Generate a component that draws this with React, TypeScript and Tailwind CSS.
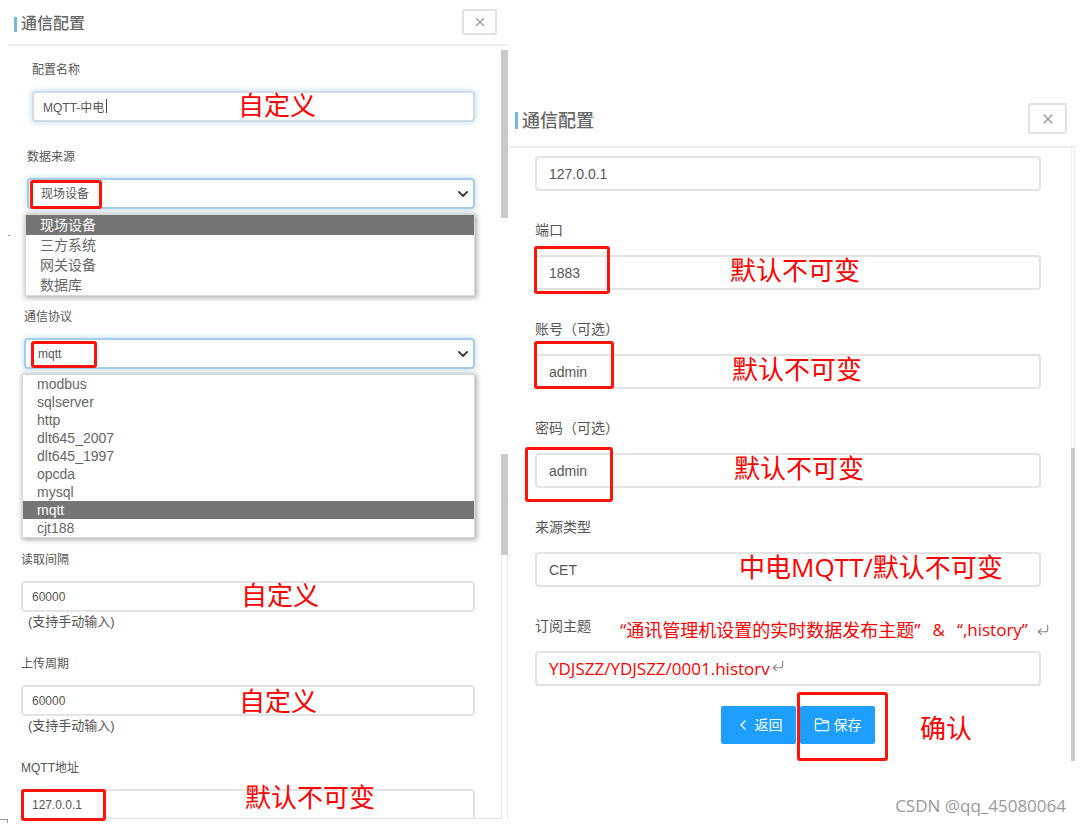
import type { ReactNode } from 'react';
import { ChevronDown, ChevronLeft, CornerDownLeft, X } from 'lucide-react';
import clsx from 'clsx';

const sources = ['现场设备', '三方系统', '网关设备', '数据库'];
const protocols = ['modbus', 'sqlserver', 'http', 'dlt645_2007', 'dlt645_1997', 'opcda', 'mysql', 'mqtt', 'cjt188'];

const uiFont = "font-['Liberation_Sans','Noto_Sans_CJK_SC',sans-serif]";
const noteFont = "font-['Open_Sans','Noto_Sans_CJK_SC',sans-serif]";

/* red remark lying over a field */
function Note({ className, children }: { className: string; children: ReactNode }) {
  return (
    <span
      className={clsx(
        'pointer-events-none absolute whitespace-nowrap text-[26px] leading-8 text-[#ff0000]',
        noteFont,
        className,
      )}
    >
      {children}
    </span>
  );
}

/* red frame around the value to fill in */
function Mark({ className }: { className: string }) {
  return <span className={clsx('pointer-events-none absolute rounded-[3px] border-[3px] border-[#ff1208]', className)} />;
}

function Header({ large }: { large?: boolean }) {
  return (
    <header
      className={clsx(
        'flex items-center justify-between border-b-2 border-[#ececf0]',
        large ? 'h-[57px] pl-1.5 pr-2' : 'ml-2 h-[46px] pl-1.5 pr-[11px]',
      )}
    >
      <h2 className={clsx('flex items-center gap-1 pt-1 font-medium leading-5 text-[#666]', large ? 'text-lg' : 'text-base')}>
        <span className={clsx('w-[3px] bg-[#74b7d8]', large ? 'h-[17px]' : 'h-[15px]')} />
        通信配置
      </h2>
      <button
        type="button"
        aria-label="关闭"
        className={clsx(
          'flex items-center justify-center rounded-xs border-2 border-[#e2e2e2] bg-white text-[#999]',
          large ? 'h-[31px] w-[39px]' : 'h-[26px] w-[35px]',
        )}
      >
        <X size={large ? 16 : 14} strokeWidth={2} />
      </button>
    </header>
  );
}

interface FieldProps {
  id: string;
  label?: string;
  value: string;
  large?: boolean;
  focused?: boolean;
  cut?: boolean;
  inputClass?: string;
  className?: string;
  children?: ReactNode;
}

function Field({ id, label, value, large, focused, cut, inputClass, className, children }: FieldProps) {
  return (
    <div className={className}>
      {label && (
        <label htmlFor={id} className={clsx('block leading-5', large ? 'mb-[15px] text-sm' : 'mb-[11px] text-xs')}>
          {label}
        </label>
      )}
      <div className="relative">
        <input
          id={id}
          aria-label={label ?? 'MQTT地址'}
          defaultValue={value}
          className={clsx(
            'block w-full border-2 bg-white outline-none',
            large ? 'h-[35px] px-3' : 'px-[9px] text-xs',
            cut ? 'h-[29px] rounded-t border-b-0' : 'rounded',
            !large && !cut && 'h-[31px]',
            focused ? 'border-[#d3dbe2] shadow-[0_0_6px_#b5d8f0]' : 'border-[#e3e3e3]',
            inputClass ?? (large && 'text-sm'),
          )}
        />
        {children}
      </div>
    </div>
  );
}

interface PickerProps {
  id: string;
  label: string;
  value: string;
  options: string[];
  className?: string;
  children?: ReactNode;
}

function Picker({ id, label, value, options, className, children }: PickerProps) {
  return (
    <div className={className}>
      <label htmlFor={id} className="mb-[11px] block text-xs leading-5">
        {label}
      </label>
      <div className="relative">
        <select
          id={id}
          defaultValue={value}
          className="block h-[31px] w-full appearance-none rounded border-2 border-[#a5cce4] bg-white px-3 text-xs shadow-[0_0_6px_#b5d8f0] outline-none"
        >
          {options.map((o) => (
            <option key={o}>{o}</option>
          ))}
        </select>
        <ChevronDown size={16} strokeWidth={3} className="pointer-events-none absolute right-1 top-2 text-[#444]" />
        {children}
      </div>
    </div>
  );
}

function OptionList({ options, active, className, itemClass }: { options: string[]; active: string; className: string; itemClass: string }) {
  return (
    <ul className={clsx('relative border border-[#d8d8d8] bg-white text-sm shadow-[1px_1px_5px_1px_#b0b0b0]', className)}>
      {options.map((o) => (
        <li key={o} className={clsx('px-3.5', itemClass, o === active ? 'bg-[#757575] text-white' : 'text-[#666]')}>
          {o}
        </li>
      ))}
    </ul>
  );
}

function LeftPanel() {
  return (
    <section className="pr-px">
      <Header />
      <div className="flex">
        <form className="min-w-0 flex-1 pr-[26px] pt-3.5">
          <Field id="name" label="配置名称" value="MQTT-中电" focused className="pl-8">
            <span className="absolute left-[74px] top-2 h-3.5 w-px bg-[#444]" />
            <Note className="-top-0.5 left-[206px]">自定义</Note>
          </Field>

          <Picker id="source" label="数据来源" value="现场设备" options={sources} className="mt-[25px] pl-[27px]">
            <Mark className="left-[3px] top-0.5 h-[29px] w-[72px]" />
          </Picker>
          <OptionList options={sources} active="现场设备" className="ml-[25px] mt-[5px]" itemClass="leading-5" />

          <Picker id="protocol" label="通信协议" value="mqtt" options={protocols} className="mt-[11px] pl-6">
            <Mark className="left-[7px] top-[3px] h-[27px] w-[66px]" />
          </Picker>
          <OptionList options={protocols} active="mqtt" className="ml-[22px] mt-[5px]" itemClass="leading-[18px]" />

          <Field id="interval" label="读取间隔" value="60000" className="mt-3 pl-[21px]">
            <Note className="-top-0.5 left-[220px]">自定义</Note>
          </Field>
          <p className="pl-7 text-[13px] leading-5">(支持手动输入)</p>

          <Field id="period" label="上传周期" value="60000" className="mt-[22px] pl-[21px]">
            <Note className="left-[218px] top-0">自定义</Note>
          </Field>
          <p className="pl-7 text-[13px] leading-5">(支持手动输入)</p>

          <Field id="address" label="MQTT地址" value="127.0.0.1" cut className="mt-[22px] pl-[21px]">
            <Mark className="left-0 top-0 h-8 w-[85px]" />
            <Note className="-top-2 left-[224px]">默认不可变</Note>
          </Field>
          <div className="-mr-[26px] ml-[21px] border-b border-[#e3e3e3]" />
        </form>

        {/* scrollbar: two thumbs, the track shows only under the lower one */}
        <div className="flex w-[7px] flex-col pt-1">
          <span className="h-[168px] bg-[#c9c9c9]" />
          <span className="mt-[236px] h-[101px] bg-[#c9c9c9]" />
          <span className="flex-1 border-x border-[#e8e8e8]" />
        </div>
      </div>
    </section>
  );
}

function FolderIcon() {
  return (
    <svg width="16" height="16" viewBox="0 0 16 16" fill="none" stroke="currentColor" strokeWidth="1.2" strokeLinejoin="round">
      <path d="M1.5 3v9.5a1.2 1.2 0 0 0 1.2 1.2h10.6a1.2 1.2 0 0 0 1.2-1.2V5a1.2 1.2 0 0 0-1.2-1.2H8.6L7 1.8H2.7A1.2 1.2 0 0 0 1.5 3z" />
      <path d="M1.5 6.6h6l1.6-1h5.4" />
    </svg>
  );
}

function RightPanel() {
  return (
    <section className="pr-1.5 pt-[91px]">
      <Header large />
      <div className="flex">
        <form className="min-w-0 flex-1 pb-[17px] pl-[26px] pr-[30px] pt-2">
          <Field id="host" value="127.0.0.1" large />

          <Field id="port" label="端口" value="1883" large className="mt-[29px]">
            <Mark className="-left-px -top-[9px] h-12 w-[76px]" />
            <Note className="-top-px left-[195px]">默认不可变</Note>
          </Field>

          <Field id="account" label="账号（可选）" value="admin" large className="mt-[29px]">
            <Mark className="-left-px -top-[13px] h-12 w-20" />
            <Note className="-top-px left-[197px]">默认不可变</Note>
          </Field>

          <Field id="password" label="密码（可选）" value="admin" large className="mt-[29px]">
            <Mark className="-left-2.5 -top-1.5 h-[55px] w-[88px]" />
            <Note className="-top-px left-[199px]">默认不可变</Note>
          </Field>

          <Field id="type" label="来源类型" value="CET" large className="mt-[29px]">
            <Note className="-top-px left-[204px]">中电MQTT/默认不可变</Note>
          </Field>

          <Field
            id="topic"
            label="订阅主题"
            value="YDJSZZ/YDJSZZ/0001.historv"
            large
            className="mt-[29px]"
            inputClass="font-['Open_Sans',sans-serif] text-[17px] text-[#ff0000]"
          >
            <CornerDownLeft size={14} strokeWidth={2} className="absolute left-[236px] top-2 text-[#888]" />
            <span
              className={clsx(
                'absolute -top-[33px] left-[85px] flex items-center whitespace-nowrap text-lg leading-6 text-[#ff0000]',
                noteFont,
              )}
            >
              “通讯管理机设置的实时数据发布主题”
              <span className="ml-3 text-[17px]">&amp;</span>
              <span className="ml-3 text-[17px]">“,history”</span>
              <CornerDownLeft size={14} strokeWidth={2} className="ml-2 text-[#888]" />
            </span>
          </Field>

          <div className="mt-5 flex justify-end gap-1 pr-[166px] text-sm text-white">
            <button type="button" className="flex h-[38px] w-[75px] items-center justify-center gap-1 rounded-xs bg-[#1e9fff]">
              <ChevronLeft size={16} strokeWidth={2} />
              返回
            </button>
            <div className="relative">
              <button type="button" className="flex h-[38px] w-[75px] items-center justify-center gap-1 rounded-xs bg-[#1e9fff]">
                <FolderIcon />
                保存
              </button>
              <Mark className="-left-[3px] -top-3.5 h-[69px] w-[91px]" />
              <Note className="left-[120px] top-1.5">确认</Note>
            </div>
          </div>
        </form>

        <div className="flex w-1 flex-col">
          <span className="h-[300px] border-x border-[#ececec]" />
          <span className="flex-1 bg-[#c9c9c9]" />
        </div>
      </div>
      <footer className="mt-[33px] pr-[9px] text-right font-['Open_Sans',sans-serif] text-[17px] leading-6 text-[#999]">
        CSDN @qq_45080064
      </footer>
    </section>
  );
}

export default function App() {
  return (
    <main className={clsx('relative grid grid-cols-[509fr_572fr] overflow-hidden bg-white pb-1 text-[#555]', uiFont)}>
      <LeftPanel />
      <RightPanel />
      {/* page crop marks */}
      <span className="absolute left-2 top-[235px] h-px w-0.5 bg-[#999]" />
      <span className="absolute left-0 top-[819px] h-[5px] w-2 border-r border-t border-[#999]" />
    </main>
  );
}
